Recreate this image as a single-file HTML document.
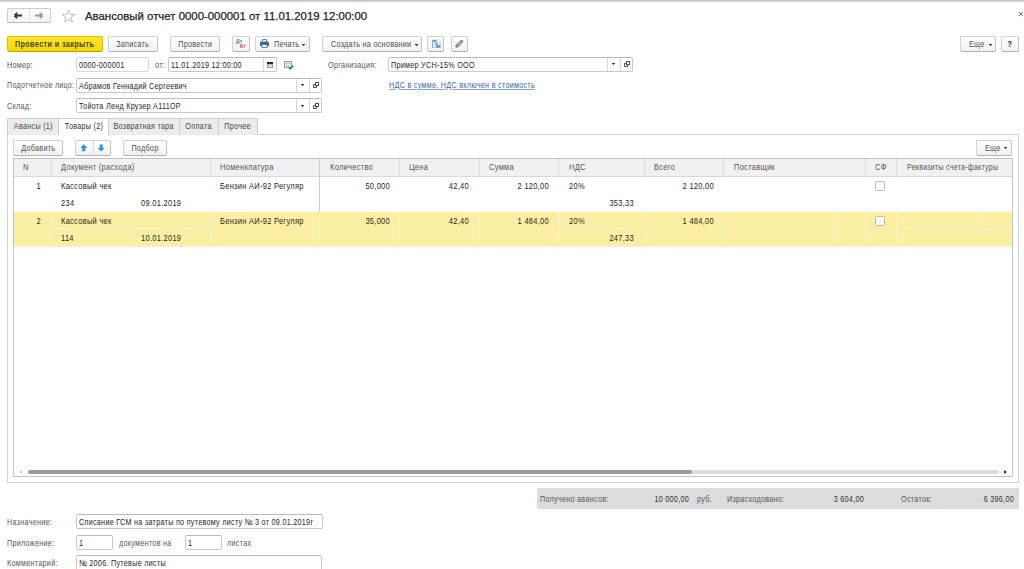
<!DOCTYPE html>
<html><head><meta charset="utf-8">
<style>
*{box-sizing:border-box;margin:0;padding:0}
html,body{width:1024px;height:569px;overflow:hidden;background:#fff}
body{position:relative;font-family:"Liberation Sans",sans-serif;font-size:9px;color:#4a4a4a;letter-spacing:.35px}
.a{position:absolute}
.t{position:absolute;white-space:nowrap;line-height:14px}
.btn{position:absolute;height:16px;border:1px solid #d2d2d2;border-bottom-color:#b3b3b3;border-right-color:#c4c4c4;border-radius:2px;background:linear-gradient(#ffffff,#f0f0f0);line-height:14px;text-align:center;color:#505050;white-space:nowrap}
.inp{position:absolute;height:15px;border:1px solid #c9c9c9;border-top-color:#b9b9b9;border-radius:2px;background:#fff;line-height:15px;padding-left:2px;color:#262626;white-space:nowrap}
.div{position:absolute;top:0;bottom:0;width:1px;background:#d6d6d6}
.dd{position:absolute;width:3px;height:1px;background:#444}.dd::after{content:'';position:absolute;left:1px;top:1px;width:1px;height:1px;background:#555}
.lbl{position:absolute;white-space:nowrap;line-height:17px;color:#585858}
.tab{position:absolute;white-space:nowrap;top:118px;height:17px;border:1px solid #cfcfcf;border-bottom:none;background:#ececec;line-height:15px;text-align:center;color:#444}
.gh{position:absolute;top:0;height:18px;line-height:18px;color:#555;white-space:nowrap}
.vl{position:absolute;width:1px;background:#dedede}
.cell{position:absolute;white-space:nowrap;line-height:14px;color:#262626}
i{font-style:normal;display:inline-block;transform:scaleX(.80);transform-origin:50% 50%}
.L{transform-origin:0 50%}
.sx{transform:scaleX(.80);transform-origin:0 50%}
.rx{transform:scaleX(.80);transform-origin:100% 50%}
#grid .sx{transform:scaleX(.83)}#grid .rx{transform:scaleX(.83)}
i:not(.L){margin:0 -30px}
</style></head><body>
<!-- top line -->
<div class="a" style="left:0;top:0;width:1024px;height:1px;background:#c6c6c6"></div>
<div class="a" style="left:0;top:1px;width:1024px;height:1px;background:#dadada"></div><div class="a" style="left:0;top:2px;width:1024px;height:1px;background:#f2f2f2"></div>

<!-- nav buttons -->
<div class="a" style="left:7px;top:8px;width:44px;height:15px;border:1px solid #cdcdcd;border-bottom-color:#b8b8b8;border-radius:2px;background:linear-gradient(#fff,#f3f3f3)"></div>
<div class="a" style="left:29px;top:9px;width:1px;height:13px;background:#e0e0e0"></div>
<svg class="a" style="left:13px;top:11px" width="10" height="9" viewBox="0 0 10 9"><path d="M1.2 4.5H9M1.5 4.5L4.2 1.9M1.5 4.5L4.2 7.1" stroke="#333" stroke-width="1.8" fill="none"/></svg>
<svg class="a" style="left:34px;top:11px" width="10" height="9" viewBox="0 0 10 9"><path d="M8.8 4.5H1M8.5 4.5L5.8 1.9M8.5 4.5L5.8 7.1" stroke="#9c9c9c" stroke-width="1.8" fill="none"/></svg>
<!-- star -->
<svg class="a" style="left:61px;top:9px" width="15" height="14" viewBox="0 0 15 14"><path d="M7.5 1L9.2 5.3L13.8 5.5L10.2 8.4L11.5 13L7.5 10.4L3.5 13L4.8 8.4L1.2 5.5L5.8 5.3Z" stroke="#b8b8b8" stroke-width="0.9" fill="none"/></svg>
<!-- title -->
<div class="t" style="left:85px;top:8px;font-size:11.4px;line-height:16px;color:#1e1e1e;letter-spacing:0;-webkit-text-stroke:0.25px">Авансовый отчет 0000-000001 от 11.01.2019 12:00:00</div>
<!-- close -->
<svg class="a" style="left:1018px;top:11px" width="6" height="6" viewBox="0 0 6 6"><path d="M1 1.3L4.8 5M4.8 1.3L1 5" stroke="#666" stroke-width="1"/></svg>

<!-- toolbar -->
<div class="btn" style="left:7px;top:36px;width:96px;background:linear-gradient(#fde628,#f5d600);border-color:#dcc000;border-bottom-color:#bfa400;color:#4a4430;font-weight:bold;letter-spacing:.5px"><i>Провести и закрыть</i></div>
<div class="btn" style="left:108px;top:36px;width:50px"><i>Записать</i></div>
<div class="btn" style="left:170px;top:36px;width:50px"><i>Провести</i></div>
<div class="btn" style="left:232px;top:36px;width:18px"></div>
<div class="t" style="left:236px;top:38px;font-size:5px;line-height:6px;color:#2a9a3a;-webkit-text-stroke:0.2px">Дт</div>
<div class="t" style="left:240px;top:43px;font-size:5px;line-height:6px;color:#d83a3a;-webkit-text-stroke:0.2px">Кт</div>
<div class="btn" style="left:255px;top:36px;width:55px;text-align:left;padding-left:18px"><i class="L">Печать</i></div>
<svg class="a" style="left:260px;top:39px" width="9" height="9" viewBox="0 0 9 9"><rect x="2.3" y="0.6" width="4.4" height="2.6" rx="0.6" fill="#fff" stroke="#555" stroke-width="0.9"/><rect x="0" y="2.8" width="9" height="4.4" rx="1.2" fill="#3e6799"/><rect x="2" y="5.4" width="5" height="3.1" fill="#fff" stroke="#4a6a95" stroke-width="0.8"/></svg>
<div class="dd" style="left:302px;top:44px"></div>
<div class="btn" style="left:322px;top:36px;width:100px;text-align:left;padding-left:8px"><i class="L">Создать на основании</i></div>
<div class="dd" style="left:415px;top:44px"></div>
<div class="btn" style="left:427px;top:36px;width:17px"></div>
<svg class="a" style="left:432px;top:39px" width="9" height="9" viewBox="0 0 9 9"><rect x="0.5" y="0.8" width="4" height="2.2" fill="#5aa2d6"/><rect x="0" y="0.8" width="1" height="8" fill="#7ab0d8"/><rect x="0" y="7.8" width="3.5" height="1" fill="#8abce0"/><rect x="2.5" y="3.5" width="3.5" height="2.5" fill="#8ab0d8"/><rect x="4" y="6" width="4.5" height="2.8" fill="#6c94cc"/><rect x="5.6" y="0.8" width="2.6" height="2.4" fill="none" stroke="#c8d8e8" stroke-width="0.7"/><rect x="7.5" y="3.2" width="1" height="2.8" fill="#b8cce4"/></svg>
<div class="btn" style="left:451px;top:36px;width:17px"></div>
<svg class="a" style="left:455px;top:39px" width="9" height="9" viewBox="0 0 9 9"><path d="M2 7L6.6 2.4" stroke="#8a8a8a" stroke-width="3.2" stroke-linecap="round"/><path d="M3.2 5.8L6 3" stroke="#e8e8e8" stroke-width="0.9" stroke-linecap="round"/></svg>
<div class="btn" style="left:960px;top:36px;width:36px;text-align:left;padding-left:8px"><i class="L">Еще</i></div>
<div class="dd" style="left:989px;top:44px"></div>
<div class="btn" style="left:1001px;top:36px;width:18px;font-weight:bold;color:#333"><i>?</i></div>

<!-- row 1 -->
<div class="lbl sx" style="left:7px;top:57px">Номер:</div>
<div class="inp" style="left:76px;top:57px;width:73px;border-color:#d9d9d9"><i class="L">0000-000001</i></div>
<div class="lbl sx" style="left:155px;top:57px">от:</div>
<div class="inp" style="left:168px;top:57px;width:109px"><i class="L">11.01.2019 12:00:00</i><div class="div" style="left:94px"></div></div>
<svg class="a" style="left:267px;top:62px" width="6" height="6" viewBox="0 0 6 6"><rect x="0" y="0" width="6" height="6" rx="0.5" fill="#9a9a9a"/><rect x="0" y="0" width="6" height="2" fill="#2a2a2a"/><rect x="1" y="2.5" width="4" height="2.7" fill="#dcdcdc"/></svg>
<svg class="a" style="left:284px;top:61px" width="10" height="9" viewBox="0 0 10 9"><rect x="0.5" y="0.5" width="7" height="6" fill="#e8e8f0" stroke="#9a9a9a"/><path d="M2 2.5H6M2 4.5H5" stroke="#b0b0c0" stroke-width="0.8"/><path d="M4.6 6.2L6.3 7.8L9.3 4.6" stroke="#22a022" stroke-width="1.6" fill="none"/></svg>
<div class="lbl sx" style="left:328px;top:57px">Организация:</div>
<div class="inp" style="left:388px;top:57px;width:245px"><i class="L">Пример УСН-15% ООО</i><div class="div" style="left:218px"></div><div class="div" style="left:231px"></div></div>
<div class="dd" style="left:612px;top:63px"></div>
<svg class="a" style="left:624px;top:61px" width="6" height="6" viewBox="0 0 6 6"><path d="M2.5 2.5H0.5V5.5H3.5V3.5" fill="none" stroke="#505050" stroke-width="1"/><rect x="2.5" y="0.5" width="3" height="3" fill="none" stroke="#505050" stroke-width="1"/></svg>
<div class="t sx" style="left:389px;top:78px;color:#3a66a8;text-decoration:underline;text-decoration-color:#8aa6d0">НДС в сумме, НДС включен в стоимость</div>

<!-- row 2 -->
<div class="lbl sx" style="left:7px;top:77px;transform:scaleX(.79)">Подотчетное лицо:</div>
<div class="inp" style="left:76px;top:78px;width:246px"><i class="L">Абрамов Геннадий Сергеевич</i><div class="div" style="left:219px"></div><div class="div" style="left:232px"></div></div>
<div class="dd" style="left:301px;top:84px"></div>
<svg class="a" style="left:313px;top:82px" width="6" height="6" viewBox="0 0 6 6"><path d="M2.5 2.5H0.5V5.5H3.5V3.5" fill="none" stroke="#505050" stroke-width="1"/><rect x="2.5" y="0.5" width="3" height="3" fill="none" stroke="#505050" stroke-width="1"/></svg>
<!-- row 3 -->
<div class="lbl sx" style="left:7px;top:98px">Склад:</div>
<div class="inp" style="left:76px;top:98px;width:246px"><i class="L">Тойота Ленд Крузер А111ОР</i><div class="div" style="left:219px"></div><div class="div" style="left:232px"></div></div>
<div class="dd" style="left:301px;top:105px"></div>
<svg class="a" style="left:313px;top:103px" width="6" height="6" viewBox="0 0 6 6"><path d="M2.5 2.5H0.5V5.5H3.5V3.5" fill="none" stroke="#505050" stroke-width="1"/><rect x="2.5" y="0.5" width="3" height="3" fill="none" stroke="#505050" stroke-width="1"/></svg>

<!-- tabs -->
<div class="a" style="left:7px;top:134px;width:1012px;height:349px;border:1px solid #d2d2d2;background:#fff"></div>
<div class="tab" style="left:7px;width:52px"><i>Авансы (1)</i></div>
<div class="tab" style="left:58px;width:51px;background:#fff;height:18px;color:#333"><i>Товары (2)</i></div>
<div class="tab" style="left:108px;width:72px"><i>Возвратная тара</i></div>
<div class="tab" style="left:179px;width:40px"><i>Оплата</i></div>
<div class="tab" style="left:218px;width:40px"><i>Прочее</i></div>

<!-- panel buttons -->
<div class="btn" style="left:13px;top:140px;width:50px"><i>Добавить</i></div>
<div class="btn" style="left:75px;top:140px;width:36px"></div>
<div class="a" style="left:93px;top:141px;width:1px;height:13px;background:#dcdcdc"></div>
<svg class="a" style="left:80px;top:144px" width="8" height="8" viewBox="0 0 8 8"><path d="M3.8 0.3L7.2 3.9H5.3V7.3H2.3V3.9H0.4Z" fill="#2e90e0"/></svg>
<svg class="a" style="left:97px;top:144px" width="8" height="8" viewBox="0 0 8 8"><path d="M4.2 7.5L7.6 3.9H5.7V0.5H2.7V3.9H0.8Z" fill="#2e90e0"/></svg>
<div class="btn" style="left:123px;top:140px;width:44px"><i>Подбор</i></div>
<div class="btn" style="left:976px;top:140px;width:36px;text-align:left;padding-left:8px"><i class="L">Еще</i></div>
<div class="dd" style="left:1004px;top:147px"></div>

<!-- grid -->
<div class="a" id="grid" style="left:13px;top:158px;width:1000px;height:319px;border:1px solid #c4c4c4;background:#fff;overflow:hidden">
  <div class="a" style="left:0;top:0;width:998px;height:18px;background:#f1f1f1;border-bottom:1px solid #d9d9d9"></div>
  <div class="vl" style="left:37px;top:0;height:18px;background:#dcdcdc"></div>
  <div class="vl" style="left:196px;top:0;height:18px;background:#dcdcdc"></div>
  <div class="vl" style="left:305px;top:0;height:53px;background:#cfcfcf"></div>
  <div class="vl" style="left:385px;top:0;height:18px;background:#dcdcdc"></div>
  <div class="vl" style="left:465px;top:0;height:18px;background:#dcdcdc"></div>
  <div class="vl" style="left:544px;top:0;height:18px;background:#dcdcdc"></div>
  <div class="vl" style="left:630px;top:0;height:18px;background:#dcdcdc"></div>
  <div class="vl" style="left:709px;top:0;height:18px;background:#dcdcdc"></div>
  <div class="vl" style="left:851px;top:0;height:18px;background:#dcdcdc"></div>
  <div class="vl" style="left:882px;top:0;height:18px;background:#dcdcdc"></div>
  <div class="gh sx" style="left:9px;top:-1px">N</div>
  <div class="gh sx" style="left:47px;top:-1px">Документ (расхода)</div>
  <div class="gh sx" style="left:206px;top:-1px">Номенклатура</div>
  <div class="gh sx" style="left:316px;top:-1px">Количество</div>
  <div class="gh sx" style="left:395px;top:-1px">Цена</div>
  <div class="gh sx" style="left:475px;top:-1px">Сумма</div>
  <div class="gh sx" style="left:555px;top:-1px">НДС</div>
  <div class="gh sx" style="left:640px;top:-1px">Всего</div>
  <div class="gh sx" style="left:720px;top:-1px">Поставщик</div>
  <div class="gh sx" style="left:861px;top:-1px">СФ</div>
  <div class="gh sx" style="left:893px;top:-1px;transform:scaleX(.78)">Реквизиты счета-фактуры</div>
  <div class="a" style="left:0;top:53px;width:998px;height:34px;background:#fcefa3"></div>
  <div class="vl" style="left:37px;top:53px;height:34px;background:#fdf5cf"></div>
  <div class="vl" style="left:196px;top:53px;height:34px;background:#fdf5cf"></div>
  <div class="vl" style="left:305px;top:53px;height:34px;background:#fdf5cf"></div>
  <div class="vl" style="left:385px;top:53px;height:34px;background:#fdf5cf"></div>
  <div class="vl" style="left:465px;top:53px;height:34px;background:#fdf5cf"></div>
  <div class="vl" style="left:544px;top:53px;height:34px;background:#fdf5cf"></div>
  <div class="vl" style="left:630px;top:53px;height:34px;background:#fdf5cf"></div>
  <div class="vl" style="left:709px;top:53px;height:34px;background:#fdf5cf"></div>
  <div class="vl" style="left:819px;top:53px;height:34px;background:#fdf5cf"></div>
  <div class="vl" style="left:851px;top:53px;height:34px;background:#fdf5cf"></div>
  <div class="vl" style="left:882px;top:53px;height:34px;background:#fdf5cf"></div>
  <div class="vl" style="left:116px;top:70px;height:17px;background:#fdf5cf"></div>
  <div class="vl" style="left:963px;top:53px;height:17px;background:#fdf5cf"></div>
  <div class="a" style="left:38px;top:69px;width:158px;height:1px;background:#fdf5cf"></div>
  <div class="a" style="left:545px;top:69px;width:85px;height:1px;background:#fdf5cf"></div>
  <div class="a" style="left:883px;top:69px;width:115px;height:1px;background:#fdf5cf"></div>
  <div class="a" style="left:0;top:87px;width:998px;height:1px;background:#f2f2f2"></div>
  <div class="cell rx" style="left:0;top:20px;width:27px;text-align:right">1</div>
  <div class="cell sx" style="left:47px;top:20px">Кассовый чек</div>
  <div class="cell sx" style="left:47px;top:37px">234</div>
  <div class="cell sx" style="left:127px;top:37px">09.01.2019</div>
  <div class="cell sx" style="left:206px;top:20px">Бензин АИ-92 Регуляр</div>
  <div class="cell rx" style="left:300px;top:20px;width:76px;text-align:right">50,000</div>
  <div class="cell rx" style="left:380px;top:20px;width:75px;text-align:right">42,40</div>
  <div class="cell rx" style="left:460px;top:20px;width:75px;text-align:right">2 120,00</div>
  <div class="cell sx" style="left:555px;top:20px">20%</div>
  <div class="cell rx" style="left:540px;top:37px;width:80px;text-align:right">353,33</div>
  <div class="cell rx" style="left:620px;top:20px;width:80px;text-align:right">2 120,00</div>
  <div class="a" style="left:861px;top:22px;width:10px;height:10px;border:1px solid #bcbcbc;border-radius:1.5px;background:#fff"></div>
  <div class="cell rx" style="left:0;top:55px;width:27px;text-align:right">2</div>
  <div class="cell sx" style="left:47px;top:55px">Кассовый чек</div>
  <div class="cell sx" style="left:47px;top:72px">114</div>
  <div class="cell sx" style="left:127px;top:72px">10.01.2019</div>
  <div class="cell sx" style="left:206px;top:55px">Бензин АИ-92 Регуляр</div>
  <div class="cell rx" style="left:300px;top:55px;width:76px;text-align:right">35,000</div>
  <div class="cell rx" style="left:380px;top:55px;width:75px;text-align:right">42,40</div>
  <div class="cell rx" style="left:460px;top:55px;width:75px;text-align:right">1 484,00</div>
  <div class="cell sx" style="left:555px;top:55px">20%</div>
  <div class="cell rx" style="left:540px;top:72px;width:80px;text-align:right">247,33</div>
  <div class="cell rx" style="left:620px;top:55px;width:80px;text-align:right">1 484,00</div>
  <div class="a" style="left:861px;top:57px;width:10px;height:10px;border:1px solid #bcbcbc;border-radius:1.5px;background:#fff"></div>
  <!-- scrollbar -->
  <div class="a" style="left:14px;top:311px;width:971px;height:4px;border-radius:2px;background:#dcdcdc"></div>
  <div class="a" style="left:14px;top:311px;width:664px;height:4px;border-radius:2px;background:#9b9b9b"></div>
  <div class="a" style="left:6px;top:312px;width:2px;height:2px;background:#bbb"></div>
  <div class="a" style="left:990px;top:311px;width:0;height:0;border-top:2px solid transparent;border-bottom:2px solid transparent;border-left:3px solid #333"></div>
</div>

<!-- totals -->
<div class="a" style="left:537px;top:488px;width:482px;height:21px;background:#dcdcdc"></div>
<div class="t sx" style="left:540px;top:492px;color:#555">Получено авансов:</div>
<div class="t rx" style="left:600px;top:492px;width:89px;text-align:right;color:#333">10 000,00</div>
<div class="t sx" style="left:697px;top:492px;color:#555">руб.</div>
<div class="t sx" style="left:727px;top:492px;color:#555">Израсходовано:</div>
<div class="t rx" style="left:780px;top:492px;width:84px;text-align:right;color:#333">3 604,00</div>
<div class="t sx" style="left:901px;top:492px;color:#555">Остаток:</div>
<div class="t rx" style="left:930px;top:492px;width:84px;text-align:right;color:#333">6 396,00</div>

<!-- bottom fields -->
<div class="lbl sx" style="left:7px;top:514px">Назначение:</div>
<div class="inp" style="left:76px;top:514px;width:247px"><i class="L">Списание ГСМ на затраты по путевому листу № 3 от 09.01.2019г</i></div>
<div class="lbl sx" style="left:7px;top:535px">Приложение:</div>
<div class="inp" style="left:76px;top:535px;width:37px"><i class="L">1</i></div>
<div class="lbl sx" style="left:119px;top:535px">документов на</div>
<div class="inp" style="left:185px;top:535px;width:37px"><i class="L">1</i></div>
<div class="lbl sx" style="left:227px;top:535px">листах</div>
<div class="lbl sx" style="left:7px;top:555px">Комментарий:</div>
<div class="inp" style="left:76px;top:555px;width:246px;height:20px"><i class="L">№ 2006. Путевые листы</i></div>
</body></html>
